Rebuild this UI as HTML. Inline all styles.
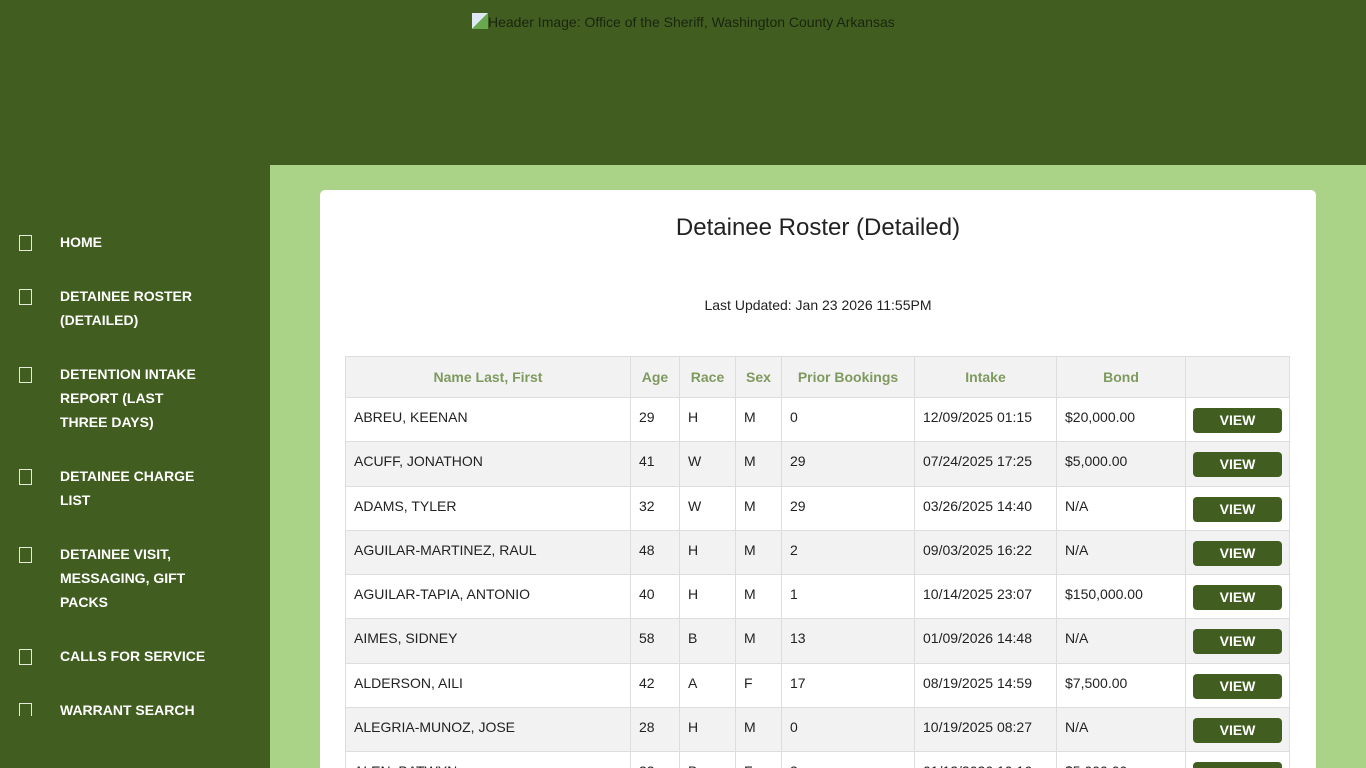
<!DOCTYPE html>
<html><head><meta charset="utf-8"><style>
*{margin:0;padding:0;box-sizing:border-box}
html{width:1366px;height:768px;overflow:hidden}
body{width:1366px;height:768px;overflow:hidden;background:#415e20;font-family:"Liberation Sans",Arial,sans-serif;position:relative}
.hdr{position:absolute;left:472px;top:13px;font-size:14px;color:#1a240f}
.hdr i{display:inline-block;width:16px;height:16px;background:linear-gradient(135deg,#dfe8f5 50%,#6aa84f 50%);vertical-align:-2px;margin-right:0}
.side{position:absolute;left:0;top:230px;width:270px;height:486px;overflow:hidden}
.it{position:relative;padding-left:60px;color:#fff;font-weight:bold;font-size:14px;line-height:24px;width:207px}
.it:before{content:"";position:absolute;left:19px;top:5px;width:11px;height:14px;border:1.5px solid #e8e8d8}
.main{position:absolute;left:270px;top:165px;width:1096px;height:603px;background:#abd388;overflow:hidden}
.card{position:absolute;left:50px;top:25px;width:996px;height:600px;background:#fff;border-radius:5px;overflow:hidden}
h1{position:absolute;left:0;width:100%;top:24px;text-align:center;font-weight:normal;font-size:24px;color:#222}
.upd{position:absolute;left:0;width:100%;top:107px;text-align:center;font-size:14px;color:#222}
table{position:absolute;left:25px;top:166px;border-collapse:collapse;width:945px;font-size:14px;color:#222}
th{height:41px;background:#f2f2f2;color:#7f9a5f;font-weight:bold;border:1px solid #ddd;text-align:center}
td{height:44.3px;border:1px solid #ddd;padding:0 8px;vertical-align:top;padding-top:11px}
tr:nth-child(odd) td{background:#f2f2f2}
.b{display:block;margin-top:0;width:89px;height:25px;background:#415e20;color:#fff;font-weight:bold;text-align:center;line-height:25px;border-radius:4px;font-size:14px}
td.v{padding:10px 7px 0}
</style></head><body>
<div class="hdr"><i></i>Header Image: Office of the Sheriff, Washington County Arkansas</div>
<div class="side">
<div class="it" style="margin-bottom:30px">HOME</div>
<div class="it" style="margin-bottom:30px">DETAINEE ROSTER (DETAILED)</div>
<div class="it" style="margin-bottom:30px">DETENTION INTAKE REPORT (LAST THREE DAYS)</div>
<div class="it" style="margin-bottom:30px">DETAINEE CHARGE LIST</div>
<div class="it" style="margin-bottom:30px">DETAINEE VISIT, MESSAGING, GIFT PACKS</div>
<div class="it" style="margin-bottom:30px">CALLS FOR SERVICE</div>
<div class="it">WARRANT SEARCH</div>
</div>
<div class="main"><div class="card">
<h1>Detainee Roster (Detailed)</h1>
<div class="upd">Last Updated: Jan 23 2026 11:55PM</div>
<table>
<tr><th style="width:285px">Name Last, First</th><th style="width:49px">Age</th><th style="width:56px">Race</th><th style="width:46px">Sex</th><th style="width:133px">Prior Bookings</th><th style="width:142px">Intake</th><th style="width:129px">Bond</th><th></th></tr>
<tr><td>ABREU, KEENAN</td><td>29</td><td>H</td><td>M</td><td>0</td><td>12/09/2025 01:15</td><td>$20,000.00</td><td class="v"><span class="b">VIEW</span></td></tr>
<tr><td>ACUFF, JONATHON</td><td>41</td><td>W</td><td>M</td><td>29</td><td>07/24/2025 17:25</td><td>$5,000.00</td><td class="v"><span class="b">VIEW</span></td></tr>
<tr><td>ADAMS, TYLER</td><td>32</td><td>W</td><td>M</td><td>29</td><td>03/26/2025 14:40</td><td>N/A</td><td class="v"><span class="b">VIEW</span></td></tr>
<tr><td>AGUILAR-MARTINEZ, RAUL</td><td>48</td><td>H</td><td>M</td><td>2</td><td>09/03/2025 16:22</td><td>N/A</td><td class="v"><span class="b">VIEW</span></td></tr>
<tr><td>AGUILAR-TAPIA, ANTONIO</td><td>40</td><td>H</td><td>M</td><td>1</td><td>10/14/2025 23:07</td><td>$150,000.00</td><td class="v"><span class="b">VIEW</span></td></tr>
<tr><td>AIMES, SIDNEY</td><td>58</td><td>B</td><td>M</td><td>13</td><td>01/09/2026 14:48</td><td>N/A</td><td class="v"><span class="b">VIEW</span></td></tr>
<tr><td>ALDERSON, AILI</td><td>42</td><td>A</td><td>F</td><td>17</td><td>08/19/2025 14:59</td><td>$7,500.00</td><td class="v"><span class="b">VIEW</span></td></tr>
<tr><td>ALEGRIA-MUNOZ, JOSE</td><td>28</td><td>H</td><td>M</td><td>0</td><td>10/19/2025 08:27</td><td>N/A</td><td class="v"><span class="b">VIEW</span></td></tr>
<tr><td>ALEN, BATWYN</td><td>33</td><td>B</td><td>F</td><td>3</td><td>01/12/2026 10:16</td><td>$5,000.00</td><td class="v"><span class="b">VIEW</span></td></tr>
</table>
</div></div>
</body></html>
